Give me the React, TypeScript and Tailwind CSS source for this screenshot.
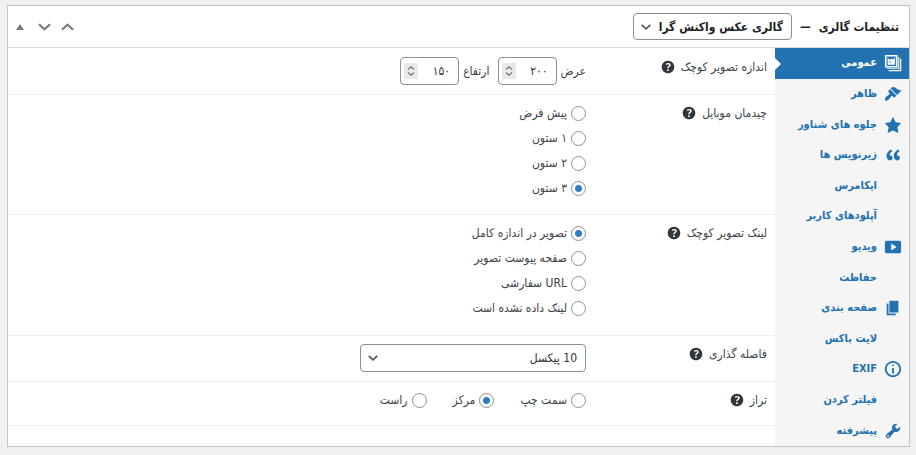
import { useState } from 'react';
import type { ReactNode } from 'react';
import clsx from 'clsx';

const ICONS = {
  appearance:
    'M14.48 11.06L7.41 3.99l1.5-1.5c.5-.56 2.3-.47 3.51.32 1.21.8 1.43 1.28 2.91 2.1 1.18.64 2.45 1.26 4.45.85zm-.71.71L6.7 4.7 4.93 6.47c-.39.39-.39 1.02 0 1.41l1.06 1.06c.39.39.39 1.03 0 1.42-.6.6-1.43 1.11-2.21 1.69-.35.26-.7.53-1.01.84C1.43 14.23.4 16.08 1.4 17.07c.99 1 2.84-.03 4.18-1.36.31-.31.58-.66.85-1.02.57-.78 1.08-1.61 1.69-2.21.39-.39 1.02-.39 1.41 0l1.06 1.06c.39.39 1.02.39 1.41 0z',
  gallery:
    'M1 1h14v14H1zM2.800 2.800v10.400h10.400V2.800zM15.800 3.200H17v13.600H3.200v-1H15.800zM17.900 5.200h1.300v13.900H5.200v-1.200H17.900zM4 4.500l2.500 2L8 5l1.500 1.500L12 4v8H4zM6 8.300v1.500h1.500V8.300z',
  star: 'M10 1l3 6 6 .75-4.12 4.62L16 19l-6-3-6 3 1.130-6.630L1 7.750 7 7z',
  quote:
    'M9.490 13.220c0-.74-.2-1.380-.61-1.900-.62-.78-1.830-.88-2.530-.72-.29-1.650 1.110-3.750 2.920-4.650L7.880 4c-2.730 1.300-5.420 4.280-4.960 8.050C3.210 14.430 4.590 16 6.540 16c.85 0 1.560-.25 2.120-.75s.83-1.180.83-2.030zm8.050 0c0-.74-.2-1.380-.61-1.900-.63-.78-1.830-.88-2.530-.72-.29-1.650 1.110-3.750 2.920-4.650L15.930 4c-2.730 1.300-5.410 4.280-4.950 8.050.29 2.380 1.660 3.950 3.610 3.950.85 0 1.560-.25 2.120-.75s.83-1.180.83-2.030z',
  video: 'M19 15V5c0-1.100-.9-2-2-2H3c-1.100 0-2 .9-2 2v10c0 1.100.9 2 2 2h14c1.100 0 2-.9 2-2zM8 14V6l6 4z',
  page: 'M6 15V2h10v13H6zm-1 1h8v2H3V5h2v11z',
  info: 'M9 15h2V9H9v6zm1-10c-.5 0-1 .5-1 1s.5 1 1 1 1-.5 1-1-.5-1-1-1zm0-4c-5 0-9 4-9 9s4 9 9 9 9-4 9-9-4-9-9-9zm0 16c-3.900 0-7-3.100-7-7s3.100-7 7-7 7 3.100 7 7-3.100 7-7 7z',
  tools:
    'M16.680 9.770c-1.340 1.340-3.300 1.670-4.950.99l-5.410 6.520c-.99.99-2.590.99-3.580 0s-.99-2.590 0-3.570l6.520-5.420c-.68-1.650-.35-3.610.99-4.950 1.280-1.280 3.120-1.620 4.720-1.060l-2.890 2.890 2.820 2.820 2.860-2.870c.53 1.580.18 3.390-1.080 4.650zM3.810 16.210c.4.39 1.040.39 1.430 0 .4-.4.4-1.040 0-1.430-.39-.4-1.030-.4-1.430 0-.39.39-.39 1.030 0 1.430z',
  help: 'M17 10c0-3.870-3.140-7-7-7-3.870 0-7 3.130-7 7s3.130 7 7 7c3.860 0 7-3.130 7-7zm-6.300 1.480H9.140v-.43c0-.38.08-.7.24-.98s.46-.57.88-.89c.41-.29.68-.53.81-.71.14-.18.2-.39.2-.62 0-.25-.09-.44-.28-.58-.19-.13-.45-.19-.79-.19-.58 0-1.250.19-2 .57l-.64-1.280c.87-.49 1.800-.74 2.770-.74.81 0 1.450.2 1.920.58.48.39.71.91.71 1.550 0 .43-.09.8-.29 1.110-.19.32-.57.67-1.110 1.060-.38.28-.62.49-.71.63-.1.15-.15.34-.15.57v.35zm-1.470 2.740c-.18-.17-.27-.42-.27-.73 0-.33.08-.58.26-.75s.43-.25.77-.25c.32 0 .57.09.75.26s.27.42.27.74c0 .3-.09.55-.27.72-.18.18-.43.27-.75.27-.33 0-.58-.09-.76-.26z',
};

type IconName = keyof typeof ICONS;

function Icon({ name, className }: { name: IconName; className?: string }) {
  return (
    <svg viewBox="0 0 20 20" fill="currentColor" fillRule="evenodd" className={className} aria-hidden="true">
      <path d={ICONS[name]} />
    </svg>
  );
}

function Chevron({ up = false, className }: { up?: boolean; className?: string }) {
  return (
    <svg viewBox="0 0 14 8" fill="none" stroke="currentColor" strokeWidth="2.4" className={className} aria-hidden="true">
      <path d={up ? 'M1 7l6-5.500L13 7' : 'M1 1l6 5.500L13 1'} />
    </svg>
  );
}

const tabs: { label: string; icon?: IconName }[] = [
  { label: 'عمومی', icon: 'gallery' },
  { label: 'ظاهر', icon: 'appearance' },
  { label: 'جلوه های شناور', icon: 'star' },
  { label: 'زیرنویس ها', icon: 'quote' },
  { label: 'ایکامرس' },
  { label: 'آپلودهای کاربر' },
  { label: 'ویدیو', icon: 'video' },
  { label: 'حفاظت' },
  { label: 'صفحه بندی', icon: 'page' },
  { label: 'لایت باکس' },
  { label: 'EXIF', icon: 'info' },
  { label: 'فیلتر کردن' },
  { label: 'پیشرفته', icon: 'tools' },
];

function Row({ title, className, children }: { title: string; className?: string; children: ReactNode }) {
  return (
    <div className={clsx('flex border-b border-[#eeeeee] px-2', className)}>
      <div className="flex h-5 w-[181px] shrink-0 items-center gap-1">
        <span>{title}</span>
        <Icon name="help" className="size-[18px] text-[#32373c]" />
      </div>
      {children}
    </div>
  );
}

function Radios({ name, options, initial, inline = false }: { name: string; options: string[]; initial?: string; inline?: boolean }) {
  const [value, setValue] = useState(initial);

  return (
    <div className={clsx('flex', inline ? 'gap-[26px]' : 'flex-col items-start gap-[5px]')}>
      {options.map((option) => (
        <label key={option} className="flex h-5 items-center gap-1">
          <input
            type="radio"
            name={name}
            checked={value === option}
            onChange={() => setValue(option)}
            className="size-[15px] shrink-0 appearance-none rounded-full border border-[#8c8f94] bg-white checked:bg-[radial-gradient(circle,#2c7dc4_3px,#ffffff_4px)]"
          />
          {option}
        </label>
      ))}
    </div>
  );
}

function SizeField({ label, initial }: { label: string; initial: string }) {
  const [value, setValue] = useState(initial);

  return (
    <label className="flex items-center gap-1">
      {label}
      <span className="relative">
        <input
          type="text"
          inputMode="numeric"
          value={value}
          onChange={(e) => setValue(e.target.value)}
          className="block h-7 w-[59px] rounded-[4px] border border-[#8c8f94] bg-white pr-2 pl-5 text-[12px] text-[#2c3338]"
        />
        <span className="absolute top-[6px] left-1 flex h-4 w-[14px] flex-col items-center justify-center gap-[2px] bg-[#e9e9ed] text-[#777777]">
          <Chevron up className="h-1 w-2" />
          <Chevron className="h-1 w-2" />
        </span>
      </span>
    </label>
  );
}

export default function App() {
  const [active, setActive] = useState('عمومی');

  return (
    <div
      dir="rtl"
      className="min-h-screen bg-[#f0f0f1] pt-[5px] pr-[6px] pb-2 pl-[7px] font-['DejaVu_Sans_Condensed','DejaVu_Sans',sans-serif] text-[12px] leading-5 text-[#3c434a]"
    >
      <section className="border border-[#c3c4c7] bg-white">
        <header className="flex h-[42px] items-center border-b border-[#dcdcde] pr-[10px] pl-2">
          <h2 className="flex items-center text-[12px] font-bold text-[#1d2327]">
            تنظیمات گالری
            <span className="mx-2">—</span>
          </h2>
          <div className="relative">
            <select
              aria-label="قالب گالری"
              className="block h-[27px] w-[159px] appearance-none rounded-[4px] border border-[#8c8f94] bg-white pr-2 pl-6 text-[12px] font-bold text-[#1d2327]"
            >
              <option>گالری عکس واکنش گرا</option>
            </select>
            <Chevron className="pointer-events-none absolute top-[11px] left-2 h-[6px] w-[10px] text-[#50575e]" />
          </div>
          <div className="mr-auto flex items-center gap-[10px] text-[#787c82]">
            <button type="button" aria-label="بالا بردن">
              <Chevron up className="h-[8px] w-[13px]" />
            </button>
            <button type="button" aria-label="پایین بردن">
              <Chevron className="h-[8px] w-[13px]" />
            </button>
            <button type="button" aria-label="بستن پنل" className="mr-1">
              <svg viewBox="0 0 8 6" fill="currentColor" className="h-[6px] w-2">
                <path d="M4 0l4 6H0z" />
              </svg>
            </button>
          </div>
        </header>

        <div className="flex">
          <nav className="flex w-[134px] shrink-0 flex-col bg-[#f5f5f5]">
            {tabs.map(({ label, icon }) => (
              <a
                key={label}
                href="#"
                onClick={(e) => {
                  e.preventDefault();
                  setActive(label);
                }}
                className={clsx(
                  'relative flex min-h-[30px] flex-1 items-center gap-[7px] pr-[7px] text-[11px] font-bold whitespace-nowrap',
                  active === label ? 'bg-[#2271b1] text-white' : 'text-[#2271b1]',
                )}
              >
                <span className="size-[18px] shrink-0">{icon && <Icon name={icon} className="size-[18px]" />}</span>
                {label}
                {active === label && (
                  <span className="absolute top-[10px] left-0 border-y-[6px] border-l-[6px] border-y-transparent border-l-white" />
                )}
              </a>
            ))}
          </nav>

          <div className="min-w-0 flex-1 pb-5">
            <Row title="اندازه تصویر کوچک" className="h-[47px] pt-[9px]">
              <div className="flex h-7 gap-2">
                <SizeField label="عرض" initial="۲۰۰" />
                <SizeField label="ارتفاع" initial="۱۵۰" />
              </div>
            </Row>
            <Row title="چیدمان موبایل" className="h-[120px] pt-2">
              <Radios name="mobile" options={['پیش فرض', '۱ ستون', '۲ ستون', '۳ ستون']} initial="۳ ستون" />
            </Row>
            <Row title="لینک تصویر کوچک" className="h-[121px] pt-2">
              <Radios
                name="link"
                options={['تصویر در اندازه کامل', 'صفحه پیوست تصویر', 'URL سفارشی', 'لینک داده نشده است']}
                initial="تصویر در اندازه کامل"
              />
            </Row>
            <Row title="فاصله گذاری" className="h-[46px] pt-2">
              <div className="relative">
                <select
                  aria-label="فاصله گذاری"
                  className="block h-7 w-[226px] appearance-none rounded-[4px] border border-[#8c8f94] bg-white pr-2 pl-6 text-[12px] text-[#2c3338]"
                >
                  <option>10 پیکسل</option>
                </select>
                <Chevron className="pointer-events-none absolute top-[11px] left-2 h-[6px] w-[10px] text-[#50575e]" />
              </div>
            </Row>
            <Row title="تراز" className="h-11 pt-2">
              <Radios name="align" options={['سمت چپ', 'مرکز', 'راست']} initial="مرکز" inline />
            </Row>
          </div>
        </div>
      </section>
    </div>
  );
}
